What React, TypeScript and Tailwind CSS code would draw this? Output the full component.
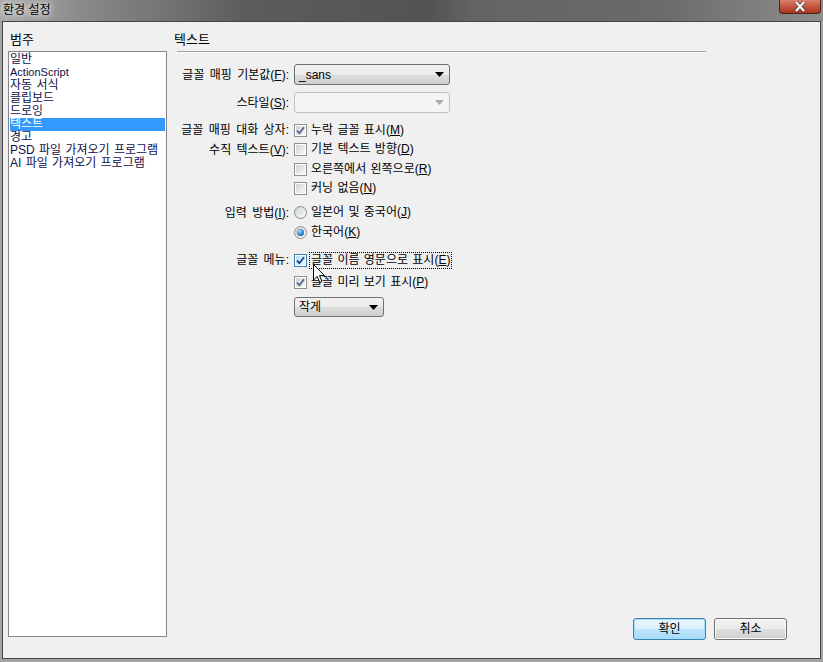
import type { ReactNode } from "react";

const font = "font-['Liberation_Sans','Noto_Sans_CJK_KR',sans-serif]";

const categories = [
  "일반",
  "ActionScript",
  "자동 서식",
  "클립보드",
  "드로잉",
  "텍스트",
  "경고",
  "PSD 파일 가져오기 프로그램",
  "AI 파일 가져오기 프로그램",
];

function M({ k }: { k: string }) {
  return (
    <>
      (<span className="underline underline-offset-1">{k}</span>)
    </>
  );
}

function CheckBox({ checked, hover }: { checked?: boolean; hover?: boolean }) {
  return (
    <span
      className={`w-[13px] h-[13px] shrink-0 border p-[1px] ${
        hover ? "border-[#3c7fb1]" : "border-[#8f8f8f]"
      } bg-white`}
    >
      <span
        className={`w-full h-full flex items-center justify-center ${
          hover
            ? "bg-[linear-gradient(135deg,#b9dcf3,#eaf6fd)]"
            : "bg-[linear-gradient(135deg,#cfd2d6,#f7f7f7)]"
        }`}
      >
        {checked && (
          <svg width="9" height="9" viewBox="0 0 9 9">
            <path
              d="M1 4.6 L3.4 7.2 L8 1.2"
              stroke={hover ? "#1b3c8c" : "#4f6391"}
              strokeWidth="1.7"
              fill="none"
            />
          </svg>
        )}
      </span>
    </span>
  );
}

function Radio({ on }: { on?: boolean }) {
  return (
    <span className="w-[13px] h-[13px] shrink-0 rounded-full border border-[#8f8f8f] bg-[linear-gradient(135deg,#cfd2d6,#fafafa)] flex items-center justify-center">
      {on && (
        <span className="w-[7px] h-[7px] rounded-full bg-[radial-gradient(circle_at_40%_35%,#a9e0fb,#2a7fc4_55%,#0d3f7c)]" />
      )}
    </span>
  );
}

function Select({ value, width, disabled }: { value?: string; width: string; disabled?: boolean }) {
  return (
    <div
      className={`${width} h-full ml-[5px] rounded-[3px] border flex items-center pl-[4px] pr-[5px] ${
        disabled
          ? "border-[#bfbfbf] bg-[#f4f4f4]"
          : "border-[#707070] bg-[linear-gradient(180deg,#f2f2f2_0%,#ebebeb_50%,#dddddd_51%,#cfcfcf_100%)]"
      }`}
    >
      <span className="flex-1 leading-[16px]">{value}</span>
      <svg width="9" height="5" viewBox="0 0 9 5">
        <path d="M0 0H9L4.5 5Z" fill={disabled ? "#a8a8a8" : "#000"} />
      </svg>
    </div>
  );
}

function Row({
  label,
  className,
  children,
}: {
  label?: ReactNode;
  className: string;
  children: ReactNode;
}) {
  return (
    <div className={`flex items-center ${className}`}>
      <span className="w-[115px] shrink-0 text-right whitespace-nowrap leading-[16px] [word-spacing:2px]">
        {label}
      </span>
      {children}
    </div>
  );
}

function Option({ box, children, focus }: { box: ReactNode; children: ReactNode; focus?: boolean }) {
  return (
    <div className="flex items-center ml-[5px]">
      {box}
      <span
        className={`ml-[2px] px-[1px] leading-[15px] whitespace-nowrap [word-spacing:1px] border border-dotted ${
          focus ? "border-black" : "border-transparent"
        }`}
      >
        {children}
      </span>
    </div>
  );
}

function Button({ children, primary }: { children: ReactNode; primary?: boolean }) {
  return (
    <button
      className={`w-[73px] h-[22px] rounded-[3px] border text-[12px] leading-[16px] ${
        primary
          ? "border-[#3c7fb1] bg-[linear-gradient(180deg,#eaf6fd_0%,#d9f0fc_50%,#bee6fd_51%,#a7d9f5_100%)] shadow-[inset_0_0_0_1px_#9fe0fc]"
          : "border-[#707070] bg-[linear-gradient(180deg,#f2f2f2_0%,#ebebeb_50%,#dddddd_51%,#cfcfcf_100%)] shadow-[inset_0_0_0_1px_#fcfcfc]"
      }`}
    >
      {children}
    </button>
  );
}

export default function App() {
  return (
    <div
      className={`w-[823px] h-[662px] relative overflow-hidden flex flex-col bg-[#a3a3a3] text-[12px] text-black ${font}`}
    >
      {/* title bar */}
      <div className="h-[21px] shrink-0 flex items-start justify-between bg-[linear-gradient(90deg,#a9a9a9_0%,#8a8a8a_10%,#5c5c5c_30%,#535353_52%,#646464_58%,#6a6a6a_80%,#8d8d8d_100%)]">
        <span className="pl-[3px] pt-[2px] text-[12px] leading-[17px] text-black [text-shadow:0_0_6px_#fff,0_0_10px_#fff]">
          환경 설정
        </span>
        <div className="mr-[2px] w-[42px] h-[14px] rounded-b-[4px] border border-t-0 border-[#50201a] bg-[linear-gradient(180deg,#d9806e_0%,#c65a45_45%,#a8341d_100%)] flex items-center justify-center">
          <svg width="14" height="11" viewBox="0 0 14 11">
            <path d="M3 1 L11 10 M11 1 L3 10" stroke="#4a4a4a" strokeWidth="3.6" />
            <path d="M3 1 L11 10 M11 1 L3 10" stroke="#fff" strokeWidth="2" />
          </svg>
        </div>
      </div>

      {/* client area */}
      <div className="flex-1 mx-[2px] mb-[3px] border border-[#464646] bg-[#f0f0f0] flex">
        {/* categories */}
        <div className="w-[159px] ml-[5px] flex flex-col">
          <div className="mt-[10px] h-[16px] pl-[2px] text-[13px] leading-[16px]">범주</div>
          <div className="mt-[3px] mb-[21px] flex-1 border border-[#828790] bg-white p-[1px]">
            {categories.map((c) => (
              <div
                key={c}
                className={`h-[13px] leading-[13px] whitespace-nowrap [word-spacing:1px] ${
                  c === "텍스트" ? "bg-[#3399ff] text-white" : "text-[#10104a]"
                } ${c === "ActionScript" ? "text-[11px]" : ""}`}
              >
                {c}
              </div>
            ))}
          </div>
        </div>

        {/* settings panel */}
        <div className="flex-1 ml-[7px] flex flex-col">
          <div className="mt-[10px] h-[16px] text-[13px] leading-[16px]">텍스트</div>
          <div className="mt-[3px] ml-[3px] w-[529px] h-[2px] border-t border-[#a0a0a0] border-b border-b-white" />

          <div className="mt-[11px] flex flex-col">
            <Row className="h-[21px]" label={<>글꼴 매핑 기본값<M k="F" />:</>}>
              <Select value="_sans" width="w-[156px]" />
            </Row>
            <Row className="mt-[7px] h-[21px]" label={<>스타일<M k="S" />:</>}>
              <Select width="w-[156px]" disabled />
            </Row>
            <Row className="mt-[7px] h-[20px]" label="글꼴 매핑 대화 상자:">
              <Option box={<CheckBox checked />}>
                누락 글꼴 표시<M k="M" />
              </Option>
            </Row>
            <Row className="h-[19.5px]" label={<>수직 텍스트<M k="V" />:</>}>
              <Option box={<CheckBox />}>
                기본 텍스트 방향<M k="D" />
              </Option>
            </Row>
            <Row className="h-[19.5px]">
              <Option box={<CheckBox />}>
                오른쪽에서 왼쪽으로<M k="R" />
              </Option>
            </Row>
            <Row className="h-[19.5px]">
              <Option box={<CheckBox />}>
                커닝 없음<M k="N" />
              </Option>
            </Row>
            <Row className="mt-[4px] h-[20px]" label={<>입력 방법<M k="I" />:</>}>
              <Option box={<Radio />}>
                일본어 및 중국어<M k="J" />
              </Option>
            </Row>
            <Row className="h-[20px]">
              <Option box={<Radio on />}>
                한국어<M k="K" />
              </Option>
            </Row>
            <Row className="mt-[7.5px] h-[20px]" label="글꼴 메뉴:">
              <Option box={<CheckBox checked hover />} focus>
                글꼴 이름 영문으로 표시<M k="E" />
              </Option>
            </Row>
            <Row className="mt-[2px] h-[20px]">
              <Option box={<CheckBox checked />}>
                글꼴 미리 보기 표시<M k="P" />
              </Option>
            </Row>
            <Row className="mt-[5px] h-[20px]">
              <Select value="작게" width="w-[90px]" />
            </Row>
          </div>

          <div className="mt-auto mb-[18px] pr-[33px] flex justify-end gap-[8px]">
            <Button primary>확인</Button>
            <Button>취소</Button>
          </div>
        </div>
      </div>

      {/* mouse pointer */}
      <svg className="absolute left-[313px] top-[264px]" width="13" height="20" viewBox="0 0 13 20">
        <path
          d="M0.5 0.5 L0.5 16 L4.2 12.4 L6.8 18.5 L9 17.5 L6.5 11.6 L11.5 11.6 Z"
          fill="#fff"
          stroke="#000"
          strokeWidth="1"
        />
      </svg>
    </div>
  );
}
